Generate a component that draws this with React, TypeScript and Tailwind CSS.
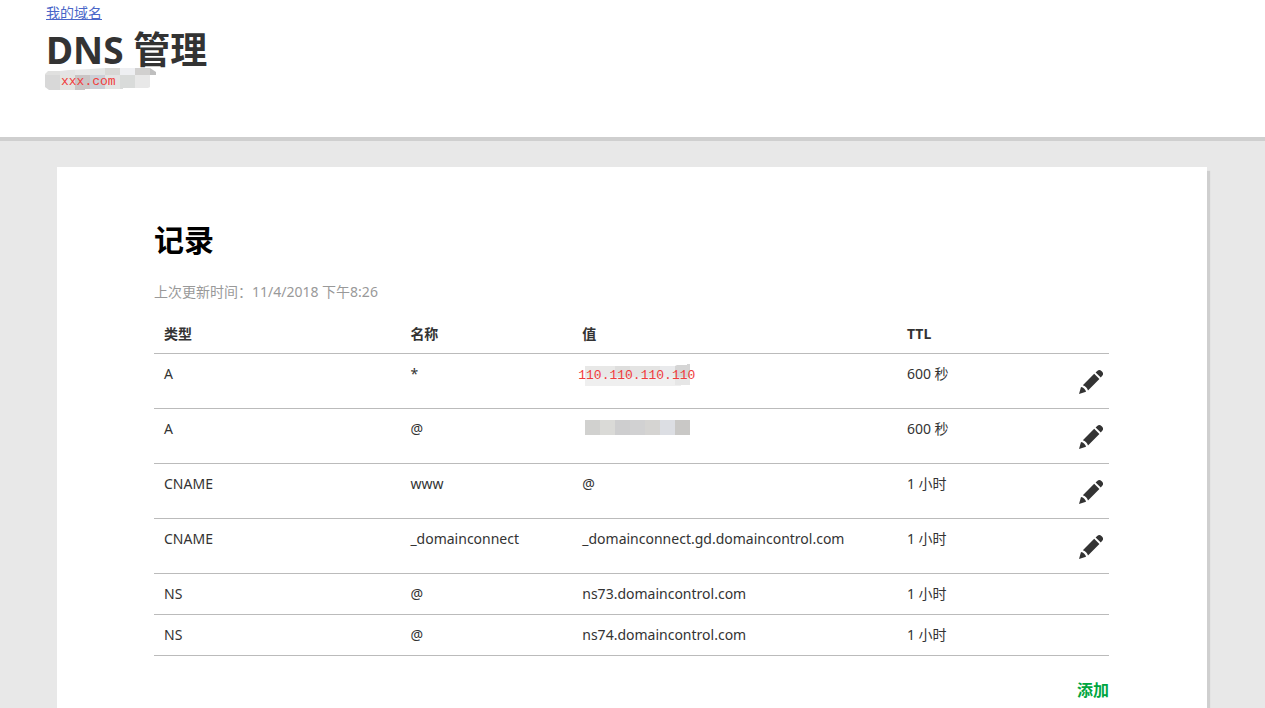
type DnsRecord = {
  type: string;
  name: string;
  value: string;
  ttl: string;
  editable: boolean;
  masked?: boolean;
};

const records: DnsRecord[] = [
  { type: 'A', name: '*', value: '110.110.110.110', ttl: '600 秒', editable: true, masked: true },
  { type: 'A', name: '@', value: '', ttl: '600 秒', editable: true, masked: true },
  { type: 'CNAME', name: 'www', value: '@', ttl: '1 小时', editable: true },
  { type: 'CNAME', name: '_domainconnect', value: '_domainconnect.gd.domaincontrol.com', ttl: '1 小时', editable: true },
  { type: 'NS', name: '@', value: 'ns73.domaincontrol.com', ttl: '1 小时', editable: false },
  { type: 'NS', name: '@', value: 'ns74.domaincontrol.com', ttl: '1 小时', editable: false },
];

function PencilIcon() {
  return (
    <svg viewBox="0 0 24 24" className="h-6 w-6" fill="currentColor" aria-hidden="true">
      <path d="M0 24 L2 17 C4.4 17.4 6.8 19.6 7 21.8 Z" />
      <path d="M3.8 15.2 L15.2 3.8 L20.4 9 L9 20.4 C8.4 18 6.2 15.8 3.8 15.2 Z" />
      <path d="M16.6 2.4 L18.2 1 C19.6 -0.3 21.2 -0.2 22.4 1 L23.2 1.8 C24.4 3 24.4 4.6 23.2 5.8 L21.8 7.6 Z" />
    </svg>
  );
}

// pixelated cover over the domain
function DomainMosaic() {
  return (
    <svg viewBox="0 0 112 22" className="absolute top-0 left-0 h-[22px] w-28" aria-hidden="true">
      <clipPath id="domain-mask">
        <path d="M0 6 L3 3 L15 3 L24 2 L45 1 L60 0 H105 L111 4 V7 H105 V19 L103 20 H78 V21 H40 V22 H4 L0 19 Z" />
      </clipPath>
      <g clipPath="url(#domain-mask)">
        <rect width="15" height="7" fill="#e0e0df" />
        <rect x="15" width="15" height="7" fill="#e4e4e4" />
        <rect x="30" width="15" height="7" fill="#e8e8e8" />
        <rect x="45" width="15" height="7" fill="#e3e5e4" />
        <rect x="60" width="15" height="7" fill="#d8d8d5" />
        <rect x="75" width="15" height="7" fill="#eeeff2" />
        <rect x="90" width="15" height="7" fill="#d1d0cf" />
        <rect x="105" width="7" height="7" fill="#bfbfbf" />
        <rect y="7" width="15" height="15" fill="#d8d8d8" />
        <rect x="15" y="7" width="15" height="15" fill="#e4e4e1" />
        <rect x="30" y="7" width="15" height="15" fill="#cac5c5" />
        <rect x="45" y="7" width="15" height="15" fill="#cccfd6" />
        <rect x="60" y="7" width="15" height="15" fill="#e3e4e3" />
        <rect x="75" y="7" width="15" height="15" fill="#d9dbda" />
        <rect x="90" y="7" width="15" height="15" fill="#e8e8e8" />
      </g>
    </svg>
  );
}

function IpMosaic() {
  return (
    <svg viewBox="0 0 105 22" className="absolute top-0 left-[13px] h-[22px] w-[105px]" aria-hidden="true">
      <rect y="2" width="30" height="11" fill="#e8e8e7" />
      <rect x="30" y="2" width="15" height="11" fill="#dededd" />
      <rect x="45" y="2" width="30" height="11" fill="#e4e4e3" />
      <rect x="75" y="2" width="15" height="11" fill="#e9eaec" />
      <path d="M90 2 L92 1 H102 V0 H105 V13 H90 Z" fill="#d5d5d5" />
      <rect y="13" width="96" height="9" fill="#efefef" />
      <rect x="90" y="13" width="15" height="8" fill="#e6e6e6" />
    </svg>
  );
}

function MosaicBar() {
  return (
    <svg viewBox="0 0 105 15" className="mt-px ml-[3px] h-[15px] w-[105px]" aria-hidden="true">
      <rect width="15" height="15" fill="#d1d1cf" />
      <rect x="15" width="15" height="15" fill="#dadad7" />
      <rect x="30" width="15" height="15" fill="#cececf" />
      <rect x="45" width="15" height="15" fill="#d1d1d2" />
      <rect x="60" width="15" height="15" fill="#d5d4d2" />
      <rect x="75" width="15" height="15" fill="#dcdee3" />
      <rect x="90" width="15" height="15" fill="#c9c8c6" />
    </svg>
  );
}

function RecordValue({ record }: { record: DnsRecord }) {
  if (!record.masked) return <>{record.value}</>;
  if (!record.value) return <MosaicBar />;
  return (
    <div className="relative -ml-[10px] pl-[6px]">
      <IpMosaic />
      <span className="relative font-['Liberation_Mono',monospace] text-[13px] text-[#f03c3c]">{record.value}</span>
    </div>
  );
}

function RecordsTable() {
  return (
    <table className="w-full table-fixed border-separate border-spacing-0 text-left text-sm text-[#333]">
      <colgroup>
        <col className="w-[25.8%]" />
        <col className="w-[18%]" />
        <col className="w-[34%]" />
        <col className="w-[12%]" />
        <col />
      </colgroup>
      <thead>
        <tr className="h-10">
          <th scope="col" className="border-b border-[#bbb] px-[10px]">类型</th>
          <th scope="col" className="border-b border-[#bbb] px-[10px]">名称</th>
          <th scope="col" className="border-b border-[#bbb] px-[10px]">值</th>
          <th scope="col" className="border-b border-[#bbb] px-[10px]">TTL</th>
          <td className="border-b border-[#bbb]"></td>
        </tr>
      </thead>
      <tbody>
        {records.map((record, i) => (
          <tr key={i} className="align-top">
            <td className="border-b border-[#bbb] p-[10px]">{record.type}</td>
            <td className="border-b border-[#bbb] p-[10px]">{record.name}</td>
            <td className="border-b border-[#bbb] p-[10px]">
              <RecordValue record={record} />
            </td>
            <td className="border-b border-[#bbb] p-[10px]">{record.ttl}</td>
            <td className="border-b border-[#bbb] pr-[6px]">
              {record.editable && (
                <button type="button" aria-label="编辑" className="ml-auto block cursor-pointer pt-4 pb-[14px]">
                  <PencilIcon />
                </button>
              )}
            </td>
          </tr>
        ))}
      </tbody>
    </table>
  );
}

function App() {
  return (
    <div className="flex min-h-screen flex-col bg-[#e8e8e8] font-['Noto_Sans','Noto_Sans_CJK_SC',sans-serif] text-[#333]">
      <header className="border-b-4 border-[#cfcfcf] bg-white px-[46px] pt-[3px] pb-[47px]">
        <a href="#" className="block w-fit text-sm text-[#4a66c8] underline">我的域名</a>
        <h1 className="pt-[9px] text-[37px] leading-9 font-bold">DNS 管理</h1>
        <div className="relative -ml-px h-[22px] pl-4 leading-[22px]">
          <DomainMosaic />
          <span className="relative font-['Liberation_Mono',monospace] text-[13px] text-[#f03c3c]">xxx.com</span>
        </div>
      </header>

      <main className="flex flex-1 flex-col pt-[26px] pr-[58px] pl-[57px]">
        <section className="mx-auto w-full max-w-[1150px] flex-1 bg-white pt-[53px] pr-[98px] pl-[97px] shadow-[3px_4px_1px_#cfcfcf]">
          <h2 className="text-3xl leading-10 font-bold text-black">记录</h2>
          <p className="pt-[22px] pb-3 text-sm text-[#999]">上次更新时间：11/4/2018 下午8:26</p>
          <RecordsTable />
          <div className="flex justify-end pt-[22px]">
            <button type="button" className="cursor-pointer text-base font-bold text-[#00a63f]">添加</button>
          </div>
        </section>
      </main>
    </div>
  );
}

export default App;
